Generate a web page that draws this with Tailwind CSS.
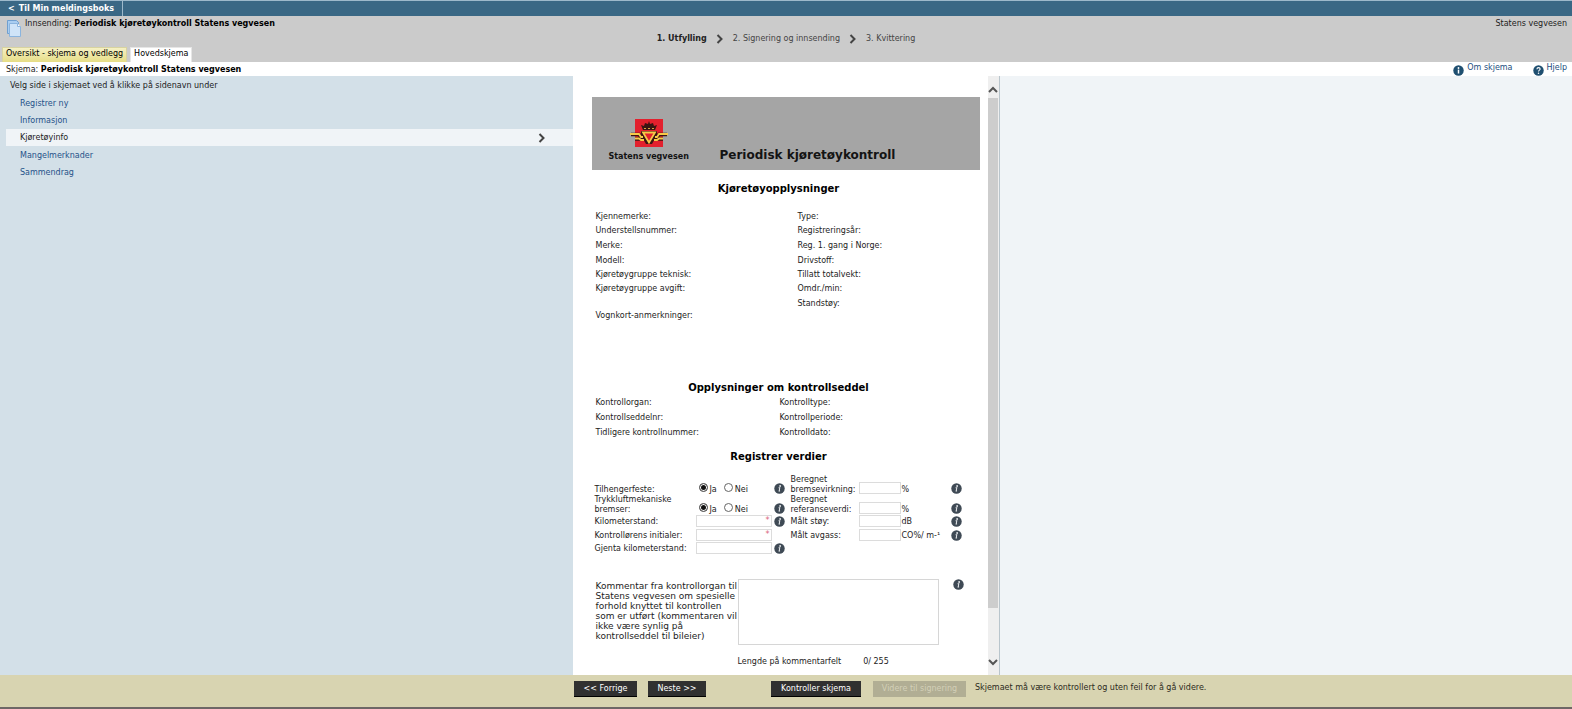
<!DOCTYPE html>
<html lang="no">
<head>
<meta charset="utf-8">
<meta name="viewport" content="width=device-width, initial-scale=1">
<title>Periodisk kjøretøykontroll</title>
<script src="https://cdn.jsdelivr.net/npm/@tailwindcss/browser@4"></script>
</head>
<body class="flex min-h-screen flex-col bg-white font-['DejaVu_Sans',sans-serif] text-[8px] leading-[10px] text-[#1c1c1c]">
<svg class="hidden">
  <symbol id="info" viewBox="0 0 12 12"><circle cx="6" cy="6" r="5.7" fill="#3f4a55"/><circle cx="6.7" cy="3.3" r="1" fill="#e6e9ec"/><path d="M5 5.3h1.300l-.7 3.500h1" fill="none" stroke="#e6e9ec" stroke-width="1.1"/></symbol>
  <symbol id="chev" viewBox="0 0 8 10"><path d="M1.5 1l4 4-4 4" fill="none" stroke="#444" stroke-width="2"/></symbol>
</svg>

<nav class="flex h-4 shrink-0 border-t border-[#9db9cb] bg-[#3a6885]">
  <a href="#" class="flex items-center gap-1 border-r border-[#9db9cb] pl-2 pr-2 font-bold text-white"><span>&lt;</span>Til Min meldingsboks</a>
</nav>

<header class="grid h-[46px] shrink-0 grid-cols-[1fr_auto_1fr] bg-[#cbcbcb]">
  <div class="flex flex-col justify-between">
    <div class="flex gap-1 pl-[7px] pt-[3px]">
      <svg class="h-[18px] w-[14px]" viewBox="0 0 14 18"><path d="M.5 1.500h9l2 2v11h-11z" fill="#a9cdf0" stroke="#6f9fd0"/><path d="M2.500 4.500h8l3 3v10h-11z" fill="#cfe4f8" stroke="#8ab4de"/><path d="M10.500 4.500v3h3" fill="#fff" stroke="#8ab4de"/></svg>
      <p class="whitespace-nowrap">Innsending: <b class="text-black">Periodisk kjøretøykontroll Statens vegvesen</b></p>
    </div>
    <div class="flex gap-[3px] pl-[2px] text-black">
      <a href="#" class="whitespace-nowrap border border-b-0 border-[#d8d3a0] bg-linear-to-b from-[#f5f0c4] to-[#e6dd85] px-[3px] pb-[3px] pt-px">Oversikt - skjema og vedlegg</a>
      <a href="#" class="whitespace-nowrap border border-b-0 border-[#e6e6e6] bg-white px-[3px] pb-[3px] pt-px">Hovedskjema</a>
    </div>
  </div>
  <ol class="flex items-center gap-[9px] text-[#444]">
    <li class="font-bold text-[#222]">1. Utfylling</li>
    <li><svg class="h-[10px] w-2"><use href="#chev"/></svg></li>
    <li>2. Signering og innsending</li>
    <li><svg class="h-[10px] w-2"><use href="#chev"/></svg></li>
    <li>3. Kvittering</li>
  </ol>
  <p class="pr-[5px] pt-[3px] text-right">Statens vegvesen</p>
</header>

<div class="flex h-[14px] shrink-0 items-end justify-between pl-[6px] pr-[5px]">
  <p class="pb-px">Skjema: <b class="text-black">Periodisk kjøretøykontroll Statens vegvesen</b></p>
  <div class="flex gap-5 text-[#1d4e7e]">
    <a href="#" class="flex gap-[3px]"><svg class="mt-[2px] size-[11px]" viewBox="0 0 12 12"><circle cx="6" cy="6" r="5.700" fill="#1f4f70"/><circle cx="6" cy="3.300" r="1" fill="#fff"/><path d="M6 5v4.300" stroke="#fff" stroke-width="1.600"/></svg>Om skjema</a>
    <a href="#" class="flex gap-[3px]"><svg class="mt-[2px] size-[11px]" viewBox="0 0 12 12"><circle cx="6" cy="6" r="5.700" fill="#1f4f70"/><path d="M4.300 4.600c0-2.400 3.500-2.200 3.500-.2C7.800 5.700 6 5.600 6 7.200" fill="none" stroke="#fff" stroke-width="1.200"/><circle cx="6" cy="9" r=".8" fill="#fff"/></svg>Hjelp</a>
  </div>
</div>

<main class="flex flex-1">
  <aside class="min-w-0 flex-1 bg-[#d3e0e8]">
    <p class="pl-[10px] pt-[5px]">Velg side i skjemaet ved å klikke på sidenavn under</p>
    <nav class="mt-[4px] flex flex-col pl-[6px] text-[#1f5288]">
      <a href="#" class="flex h-[17px] items-center pl-[14px]">Registrer ny</a>
      <a href="#" class="flex h-[17px] items-center pl-[14px]">Informasjon</a>
      <a href="#" class="flex h-[17px] items-center justify-between bg-[#f0f4f7] pl-[14px] pr-[27px] text-[#1c1c1c]">Kjøretøyinfo<svg class="h-[10px] w-2"><use href="#chev"/></svg></a>
      <a href="#" class="flex h-[18px] items-center pl-[14px] pt-px">Mangelmerknader</a>
      <a href="#" class="flex h-[17px] items-center pl-[14px]">Sammendrag</a>
    </nav>
  </aside>

  <div class="flex w-[427px] shrink-0 border-r border-[#b9c5cc]">
    <form class="flex-1 pl-[19px] pr-2 pt-[21px]">
      <div class="flex h-[73px] items-end bg-[#a5a5a5] pb-2 pl-[17px] text-[#141414]">
        <div class="flex w-[111px] flex-col items-start">
          <svg class="ml-[21px] h-[28px] w-[38px]" viewBox="0 0 38 28">
            <path d="M5 0h28v28H5z" fill="#e3202d"/>
            <path d="M13 11L11 6l3 1 1-3 3 1 1-3 1 3 3-1 1 3 3-1-2 5z" fill="#3a1512"/><path d="M14 9.500h2M18 9.500h2M22 9.500h2" stroke="#d9a441"/>
            <path d="M1 15.500h8l2 3h3M37 15.500h-8l-2 3h-3M5 20h7M33 20h-7" fill="none" stroke="#3a1512" stroke-width="3.500"/>
            <path d="M11 12h16v4l-5 9h-6l-5-9z" fill="#3a1512"/>
            <path d="M0 15h9l2 3h2M38 15h-9l-2 3h-2M5 19.500h4l2 1.500h3M33 19.500h-4l-2 1.500h-3" fill="none" stroke="#f7c948" stroke-width="1.800"/>
            <path d="M13 13.500h12l-6 10z" fill="#e3202d" stroke="#f7c948" stroke-width="1.800"/>
          </svg>
          <b class="mt-[5px] whitespace-nowrap">Statens vegvesen</b>
        </div>
        <h1 class="whitespace-nowrap text-[12px] font-bold leading-[14px]">Periodisk kjøretøykontroll</h1>
      </div>

      <h2 class="mt-3 pr-[14px] text-center text-[10px] font-bold leading-[14px] text-black">Kjøretøyopplysninger</h2>
      <div class="mt-[14px] grid grid-cols-[202px_1fr] pl-1">
        <div class="leading-[14px]">
          <p>Kjennemerke:</p><p>Understellsnummer:</p><p class="mt-px">Merke:</p><p class="mt-px">Modell:</p><p>Kjøretøygruppe teknisk:</p><p>Kjøretøygruppe avgift:</p><p class="mt-[13px]">Vognkort-anmerkninger:</p>
        </div>
        <div class="leading-[14px]">
          <p>Type:</p><p>Registreringsår:</p><p class="mt-px">Reg. 1. gang i Norge:</p><p class="mt-px">Drivstoff:</p><p>Tillatt totalvekt:</p><p>Omdr./min:</p><p class="mt-px">Standstøy:</p>
        </div>
      </div>

      <h2 class="mt-[58px] pr-[14px] text-center text-[10px] font-bold leading-[14px] text-black">Opplysninger om kontrollseddel</h2>
      <div class="grid grid-cols-[184px_1fr] gap-y-px pl-1 pt-px leading-[14px]">
        <p>Kontrollorgan:</p><p>Kontrolltype:</p>
        <p>Kontrollseddelnr:</p><p>Kontrollperiode:</p>
        <p>Tidligere kontrollnummer:</p><p>Kontrolldato:</p>
      </div>

      <h2 class="mt-[10px] pr-[14px] text-center text-[10px] font-bold leading-[14px] text-black">Registrer verdier</h2>
      <div class="mt-[11px] grid grid-cols-[101px_78px_17px_68px_42px_50px_12px] grid-rows-[20px_20px_12px_14px_13px] items-end pl-[3px]">
        <span id="th">Tilhengerfeste:</span>
        <div role="radiogroup" aria-labelledby="th" class="flex items-end gap-[7px] pl-[3px]">
          <label class="flex items-end gap-[2px]"><input type="radio" name="th" checked class="mb-[3px] size-[9px] appearance-none rounded-full border border-[#666] bg-white checked:bg-[#111] checked:shadow-[inset_0_0_0_1px_#fff]">Ja</label>
          <label class="flex items-end gap-[2px]"><input type="radio" name="th" class="mb-[3px] size-[9px] appearance-none rounded-full border border-[#666] bg-white checked:bg-[#111] checked:shadow-[inset_0_0_0_1px_#fff]">Nei</label>
        </div>
        <svg class="mb-px size-[11px]"><use href="#info"/></svg>
        <label for="bv">Beregnet bremsevirkning:</label>
        <input id="bv" class="mb-px h-[12px] w-full border border-[#dcdcdc] bg-white px-px"><span class="pl-px">%</span>
        <svg class="mb-px size-[11px]"><use href="#info"/></svg>

        <span id="tb">Trykkluftmekaniske bremser:</span>
        <div role="radiogroup" aria-labelledby="tb" class="flex items-end gap-[7px] pl-[3px]">
          <label class="flex items-end gap-[2px]"><input type="radio" name="tb" checked class="mb-[3px] size-[9px] appearance-none rounded-full border border-[#666] bg-white checked:bg-[#111] checked:shadow-[inset_0_0_0_1px_#fff]">Ja</label>
          <label class="flex items-end gap-[2px]"><input type="radio" name="tb" class="mb-[3px] size-[9px] appearance-none rounded-full border border-[#666] bg-white checked:bg-[#111] checked:shadow-[inset_0_0_0_1px_#fff]">Nei</label>
        </div>
        <svg class="mb-px size-[11px]"><use href="#info"/></svg>
        <label for="rv">Beregnet referanseverdi:</label>
        <input id="rv" class="mb-px h-[12px] w-full border border-[#dcdcdc] bg-white px-px"><span class="pl-px">%</span>
        <svg class="mb-px size-[11px]"><use href="#info"/></svg>

        <label for="km" class="whitespace-nowrap">Kilometerstand:</label>
        <div class="relative h-[12px] w-[76px]"><input id="km" class="block h-[12px] w-full border border-[#dcdcdc] bg-white px-px"><span class="absolute right-[2px] top-px text-[#d9607c]">*</span></div>
        <svg class="size-[11px]"><use href="#info"/></svg>
        <label for="ms">Målt støy:</label>
        <input id="ms" class="h-[12px] w-full border border-[#dcdcdc] bg-white px-px"><span class="pl-px">dB</span>
        <svg class="size-[11px]"><use href="#info"/></svg>

        <label for="ki" class="whitespace-nowrap">Kontrollørens initialer:</label>
        <div class="relative h-[12px] w-[76px]"><input id="ki" class="block h-[12px] w-full border border-[#dcdcdc] bg-white px-px"><span class="absolute right-[2px] top-px text-[#d9607c]">*</span></div>
        <span></span>
        <label for="ma">Målt avgass:</label>
        <input id="ma" class="h-[12px] w-full border border-[#dcdcdc] bg-white px-px"><span class="whitespace-nowrap pl-px">CO%/ m-¹</span>
        <svg class="size-[11px]"><use href="#info"/></svg>

        <label for="gk" class="whitespace-nowrap">Gjenta kilometerstand:</label>
        <input id="gk" class="h-[12px] w-[76px] border border-[#dcdcdc] bg-white px-px">
        <svg class="size-[11px]"><use href="#info"/></svg>
      </div>

      <div class="mt-[25px] flex pl-1">
        <label for="kom" class="w-[142px] pt-[2px] text-[9px] leading-[10px]">Kommentar fra kontrollorgan til<br>Statens vegvesen om spesielle<br>forhold knyttet til kontrollen<br>som er utført (kommentaren vil<br>ikke være synlig på<br>kontrollseddel til bileier)</label>
        <textarea id="kom" class="block h-[66px] w-[201px] resize-none border border-[#d6d6d6] bg-white"></textarea>
        <svg class="ml-[14px] size-[11px]"><use href="#info"/></svg>
      </div>
      <p class="flex gap-[22px] pb-2 pl-[146px] pt-3"><span>Lengde på kommentarfelt</span><span>0/ 255</span></p>
    </form>
    <div class="flex w-[11px] flex-col items-center bg-[#efefef]">
      <svg class="mt-[10px] h-3 w-[10px]" viewBox="0 0 10 12"><path d="M1 6l4-4 4 4" fill="none" stroke="#555" stroke-width="2"/></svg>
      <div class="h-[510px] w-[10px] bg-[#cdcdcd]"></div>
      <svg class="mt-auto h-[18px] w-[10px]" viewBox="0 0 10 18"><path d="M1 3l4 4 4-4" fill="none" stroke="#555" stroke-width="2"/></svg>
    </div>
  </div>
  <div class="min-w-0 flex-1 bg-[#f0f4f7]"></div>
</main>

<footer class="flex h-[34px] shrink-0 items-start border-b-2 border-[#6e6766] bg-[#d8d4b1] pl-[calc(50%-212px)] pt-[6px] text-white">
  <button class="h-4 w-[63px] border-b border-black bg-[#303030]">&lt;&lt; Forrige</button>
  <button class="ml-[11px] h-4 w-[58px] border-b border-black bg-[#303030]">Neste &gt;&gt;</button>
  <button class="ml-[65px] h-4 w-[90px] border-b border-black bg-[#303030]">Kontroller skjema</button>
  <button disabled class="ml-3 h-4 w-[93px] bg-[#b1ae94] text-[#d3d0b8]">Videre til signering</button>
  <p class="ml-[9px] mt-[2px] text-[#2c2a1c]">Skjemaet må være kontrollert og uten feil for å gå videre.</p>
</footer>
</body>
</html>
